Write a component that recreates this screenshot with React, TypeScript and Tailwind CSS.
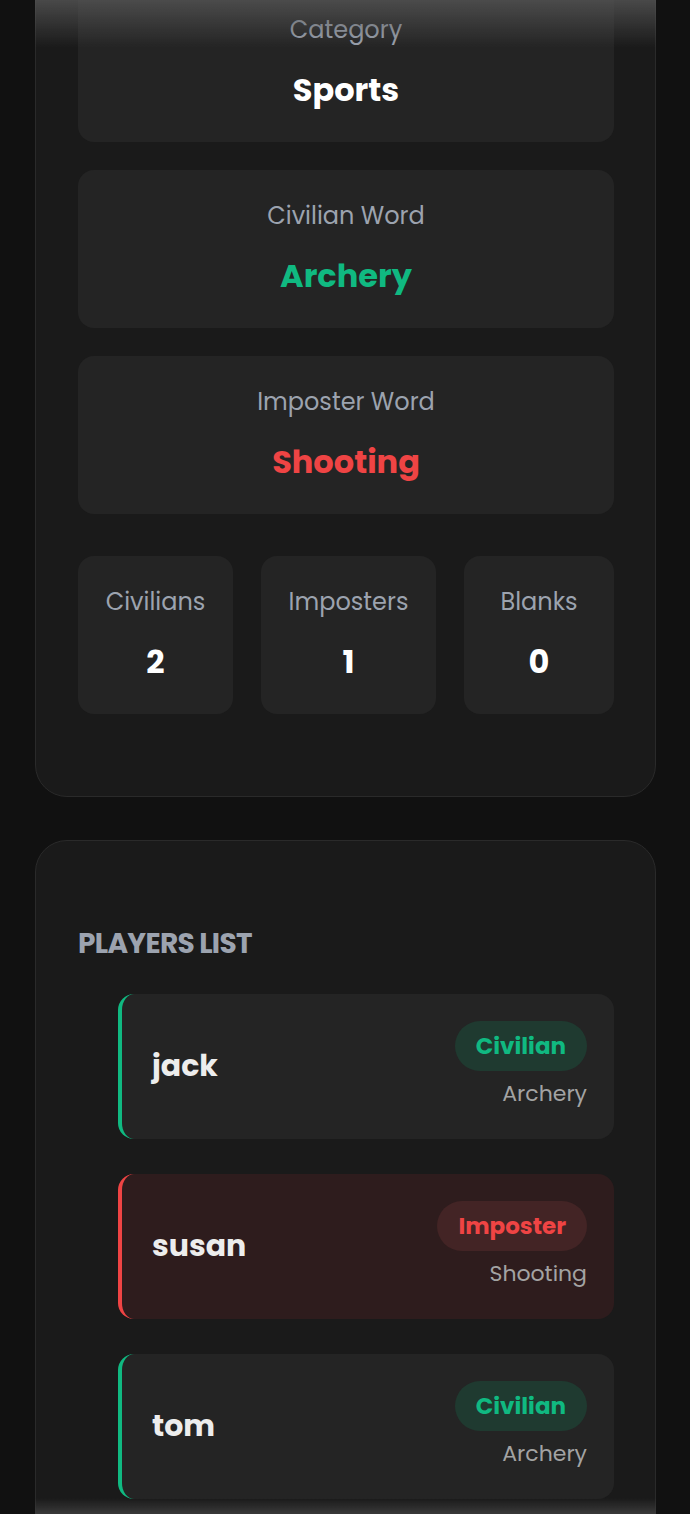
import React from "react";

const font = { fontFamily: '"Poppins", "Open Sans", "Noto Sans", sans-serif' };

type Player = { name: string; role: "Civilian" | "Imposter"; word: string };

const players: Player[] = [
  { name: "jack", role: "Civilian", word: "Archery" },
  { name: "susan", role: "Imposter", word: "Shooting" },
  { name: "tom", role: "Civilian", word: "Archery" },
];

const InfoBox = ({ label, value, tone }: { label: string; value: string; tone: string }) => (
  <div className="flex flex-col items-center gap-[25px] rounded-2xl bg-[#242424] pt-[30px] pb-[33px]">
    <p className="text-[24px] leading-[32px] text-[#9ca3af]">{label}</p>
    <p className={`text-[32px] font-bold leading-[38px] ${tone}`}>{value}</p>
  </div>
);

const StatBox = ({ label, value, width }: { label: string; value: number; width: string }) => (
  <div className={`flex flex-col items-center gap-[25px] rounded-2xl bg-[#242424] pt-[30px] pb-[33px] ${width}`}>
    <p className="text-[24px] leading-[32px] text-[#9ca3af]">{label}</p>
    <p className="text-[32px] font-bold leading-[38px] text-white">{value}</p>
  </div>
);

const PlayerRow = ({ player }: { player: Player }) => {
  const imposter = player.role === "Imposter";
  return (
    <div
      className={`flex items-center justify-between rounded-2xl border-l-4 pl-[30px] pr-[27px] pt-[27px] pb-[30px] ${
        imposter ? "border-[#ef4444] bg-[#2e1c1d]" : "border-[#10b981] bg-[#242424]"
      }`}
    >
      <p className="text-[30px] font-bold text-[#ededed]">{player.name}</p>
      <div className="flex flex-col items-end gap-[8px]">
        <span
          className={`flex h-[50px] items-center rounded-full px-[21px] text-[23px] font-bold ${
            imposter ? "bg-[#432425] text-[#ef4444]" : "bg-[#1f3a30] text-[#10b981]"
          }`}
        >
          {player.role}
        </span>
        <p className="text-[22px] leading-[30px] text-[#a3a3a3]">{player.word}</p>
      </div>
    </div>
  );
};

export default function App() {
  return (
    <div className="min-h-screen overflow-hidden bg-[#111111] pl-[35px] pr-[34px] pb-[40px]" style={font}>
      {/* top + bottom fade */}
      <div className="pointer-events-none fixed left-[35px] right-[34px] top-0 z-10 h-[48px] bg-gradient-to-b from-[#555555] to-transparent opacity-80"></div>
      <div className="pointer-events-none fixed bottom-0 left-[35px] right-[34px] z-10 h-[16px] bg-gradient-to-t from-[#3a3a3a] to-transparent"></div>

      <div className="-mt-[59px] flex flex-col gap-[28px] rounded-[32px] border border-[#2a2a2a] bg-[#1a1a1a] pl-[42px] pr-[41px] pt-[42px] pb-[82px]">
        <InfoBox label="Category" value="Sports" tone="text-white" />
        <InfoBox label="Civilian Word" value="Archery" tone="text-[#10b981]" />
        <InfoBox label="Imposter Word" value="Shooting" tone="text-[#ef4444]" />
        <div className="mt-[14px] flex gap-[28px]">
          <StatBox label="Civilians" value={2} width="w-[155px]" />
          <StatBox label="Imposters" value={1} width="w-[175px]" />
          <StatBox label="Blanks" value={0} width="flex-1" />
        </div>
      </div>

      <div className="mt-[43px] rounded-[32px] border border-[#2a2a2a] bg-[#1a1a1a] pl-[42px] pr-[41px] pt-[85px] pb-[42px]">
        <h2 className="text-[28px] font-bold uppercase leading-[36px] tracking-tight text-[#9ca3af]">Players List</h2>
        <div className="mt-[32px] flex flex-col gap-[35px] pl-[40px]">
          {players.map((p) => (
            <PlayerRow key={p.name} player={p} />
          ))}
        </div>
      </div>
    </div>
  );
}
